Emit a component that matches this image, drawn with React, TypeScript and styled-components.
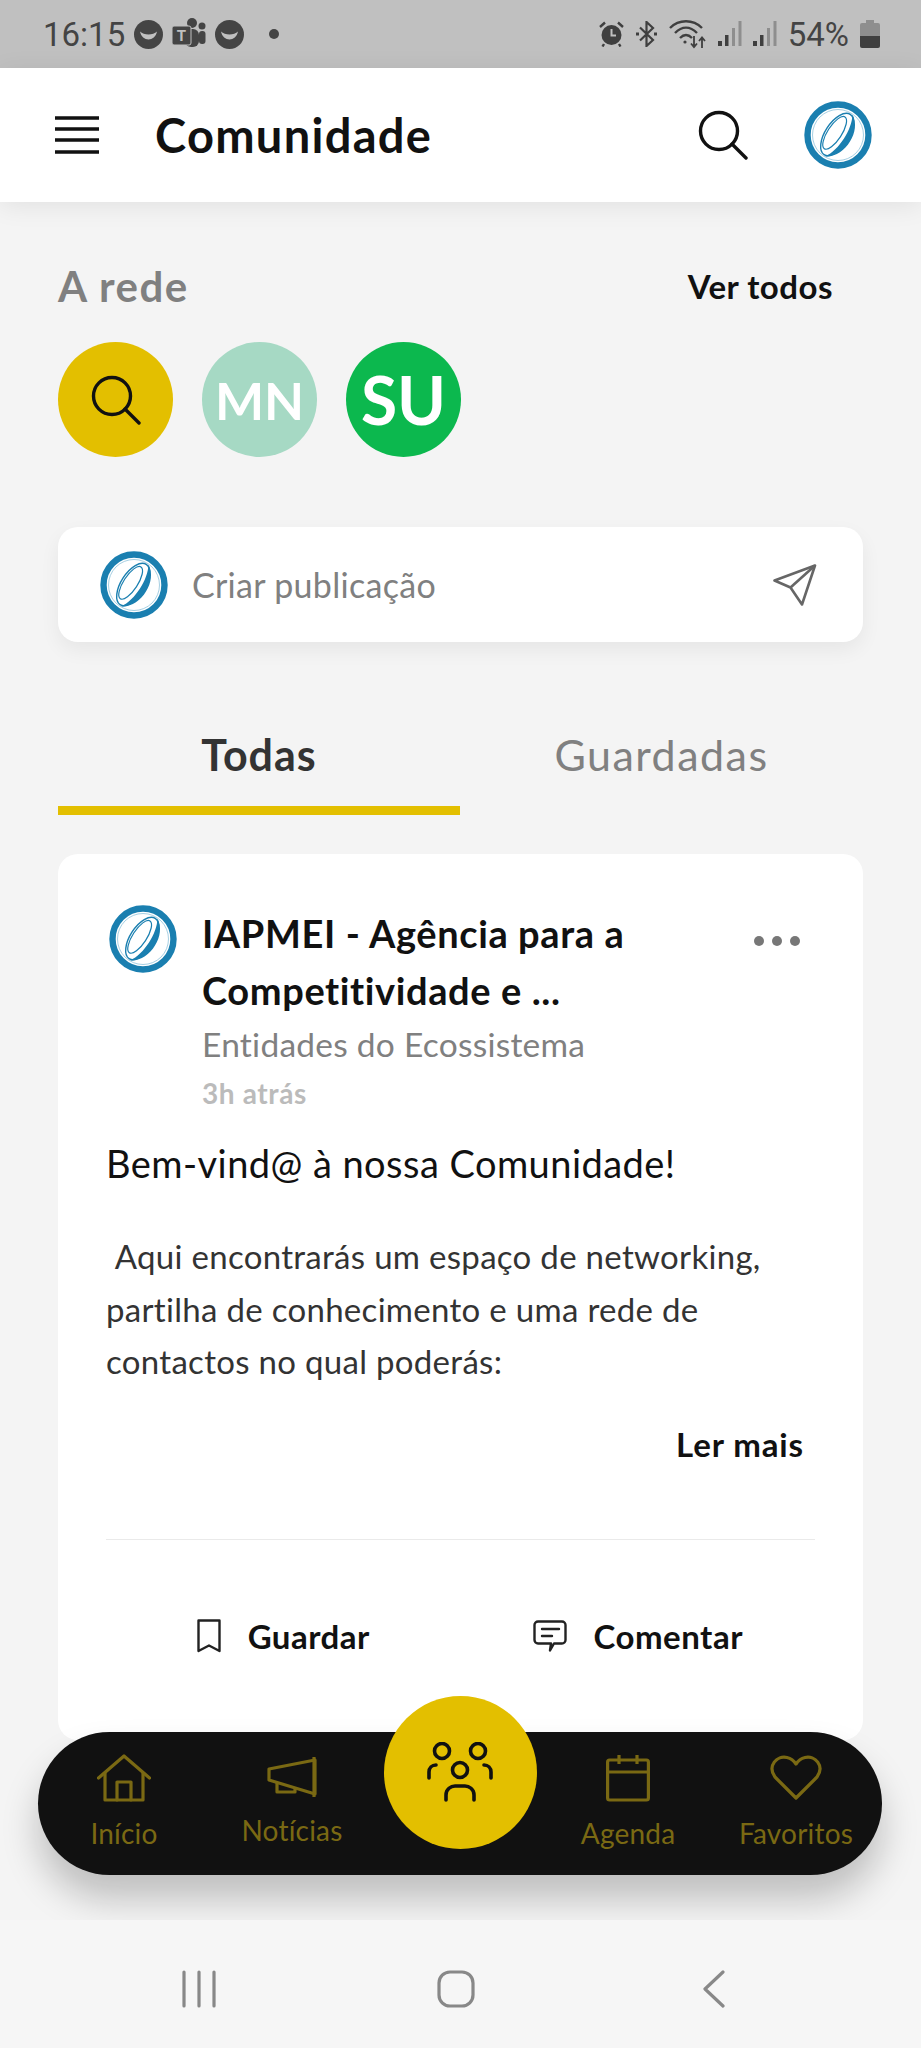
import React from "react";
import styled, { createGlobalStyle } from "styled-components";

const colors = {
  yellow: "#e3bf00",
  ink: "#111111",
  page: "#f4f4f4",
  muted: "#808080",
  navIcon: "#7a6913",
  blue: "#1a7fb0",
};

const GlobalStyle = createGlobalStyle`
  html, body {
    margin: 0;
    padding: 0;
    background: ${colors.page};
  }
  * {
    box-sizing: border-box;
  }
`;

const Page = styled.div`
  position: relative;
  width: 921px;
  height: 2048px;
  overflow: hidden;
  background: ${colors.page};
  font-family: "Lato", "Open Sans", sans-serif;
  color: ${colors.ink};
`;

const StatusBar = styled.div`
  height: 68px;
  padding: 0 41px 0 43px;
  display: flex;
  align-items: center;
  background: #c0c0c0;
  color: #444;
  font-family: "Roboto", sans-serif;
  font-size: 33px;
`;

const StatusLeft = styled.div`
  display: flex;
  align-items: center;
  gap: 9px;
`;

const StatusRight = styled.div`
  margin-left: auto;
  display: flex;
  align-items: center;
  gap: 11px;
`;

const Header = styled.header`
  position: relative;
  height: 134px;
  padding: 0 48px 0 55px;
  display: flex;
  align-items: center;
  background: #fff;
  box-shadow: 0 4px 24px rgba(0, 0, 0, 0.08);
`;

const HeaderTitle = styled.h1`
  margin: 0 0 0 56px;
  font-size: 47px;
  font-weight: 700;
  letter-spacing: 1.3px;
`;

const HeaderActions = styled.div`
  margin-left: auto;
  display: flex;
  align-items: center;
  gap: 56px;
  padding-right: 1px;
`;

const Main = styled.main`
  padding: 60px 58px 0;
`;

const NetworkHead = styled.div`
  height: 50px;
  padding: 0 30px 3px 0;
  display: flex;
  align-items: center;
  justify-content: space-between;
`;

const NetworkTitle = styled.h2`
  margin: 0;
  font-size: 42px;
  font-weight: 700;
  letter-spacing: 1.5px;
  color: ${colors.muted};
`;

const SeeAll = styled.span`
  font-size: 33px;
  font-weight: 700;
  letter-spacing: 0.5px;
`;

const Circles = styled.div`
  margin-top: 30px;
  display: flex;
  gap: 29px;
`;

const Circle = styled.div<{ $bg: string; $size?: number }>`
  width: 115px;
  height: 115px;
  border-radius: 50%;
  display: flex;
  align-items: center;
  justify-content: center;
  background: ${(p) => p.$bg};
  color: #fff;
  font-size: ${(p) => p.$size ?? 52}px;
  font-weight: 700;
`;

const Composer = styled.div`
  margin-top: 70px;
  height: 115px;
  padding: 0 46px 0 42px;
  display: flex;
  align-items: center;
  gap: 24px;
  background: #fff;
  border-radius: 20px;
  box-shadow: 0 8px 20px rgba(0, 0, 0, 0.06);
`;

const ComposerText = styled.span`
  flex: 1;
  font-size: 34px;
  letter-spacing: 0.3px;
  color: ${colors.muted};
`;

const Tabs = styled.div`
  margin-top: 72px;
  display: grid;
  grid-template-columns: 402px 1fr;
  height: 101px;
`;

const Tab = styled.div<{ $active?: boolean }>`
  padding-top: 16px;
  text-align: center;
  line-height: 50px;
  font-size: 43px;
  letter-spacing: ${(p) => (p.$active ? 1 : 1.5)}px;
  font-weight: ${(p) => (p.$active ? 700 : 400)};
  color: ${(p) => (p.$active ? "#333" : colors.muted)};
  border-bottom: 9px solid ${(p) => (p.$active ? colors.yellow : "transparent")};
`;

const Post = styled.article`
  margin-top: 39px;
  height: 886px;
  padding: 51px 48px 0;
  background: #fff;
  border-radius: 20px;
`;

const PostHead = styled.div`
  display: flex;
  align-items: flex-start;
  padding-left: 3px;
`;

const PostMeta = styled.div`
  margin-left: 25px;
  flex: 1;
`;

const PostAuthor = styled.div`
  font-size: 38px;
  font-weight: 700;
  letter-spacing: 0.6px;
  line-height: 57px;
`;

const PostGroup = styled.div`
  font-size: 33.5px;
  letter-spacing: 0.25px;
  line-height: 50px;
  color: ${colors.muted};
`;

const PostTime = styled.div`
  margin-top: 2px;
  font-size: 28px;
  font-weight: 700;
  letter-spacing: 0.6px;
  line-height: 44px;
  color: #bbb;
`;

const Dots = styled.div`
  margin: 31px 15px 0 0;
  display: flex;
  gap: 8px;
`;

const Dot = styled.span`
  width: 10px;
  height: 10px;
  border-radius: 50%;
  background: #777;
`;

const Greeting = styled.p`
  margin: 23px 0 0;
  font-size: 38px;
  letter-spacing: 0.45px;
  line-height: 50px;
`;

const Paragraph = styled.p`
  margin: 42px 0 0;
  font-size: 33px;
  letter-spacing: 0.3px;
  line-height: 52.5px;
  color: #333;
  white-space: pre-wrap;
`;

const ReadMore = styled.div`
  margin-top: 31px;
  padding-right: 11px;
  text-align: right;
  font-size: 33px;
  font-weight: 700;
  letter-spacing: 0.9px;
  line-height: 50px;
`;

const Divider = styled.hr`
  margin: 70px 0 0;
  border: 0;
  border-top: 1px solid #eaeaea;
`;

const Actions = styled.div`
  margin-top: 71px;
  display: grid;
  grid-template-columns: 1fr 1fr;
`;

const Action = styled.div`
  display: flex;
  align-items: center;
  justify-content: center;
  gap: 27px;
  font-size: 33px;
  font-weight: 700;
  letter-spacing: 0.5px;
  line-height: 50px;
`;

const Nav = styled.nav`
  position: absolute;
  left: 38px;
  top: 1732px;
  width: 844px;
  height: 143px;
  padding: 0 2px;
  display: grid;
  grid-template-columns: repeat(5, 1fr);
  background: ${colors.ink};
  border-radius: 72px;
  box-shadow: 0 24px 36px rgba(0, 0, 0, 0.22);
`;

const NavItem = styled.div`
  padding-top: 22px;
  display: flex;
  flex-direction: column;
  align-items: center;
  color: ${colors.navIcon};
`;

const NavIconSlot = styled.div`
  height: 48px;
  display: flex;
  align-items: center;
  justify-content: center;
`;

const NavLabel = styled.span<{ $raised?: boolean }>`
  margin-top: ${(p) => (p.$raised ? 10 : 13)}px;
  font-size: 28px;
  letter-spacing: 0.2px;
  line-height: 36px;
`;

const NavCenter = styled.div`
  justify-self: center;
  margin-top: -36px;
  width: 153px;
  height: 153px;
  border-radius: 50%;
  display: flex;
  align-items: center;
  justify-content: center;
  background: ${colors.yellow};
`;

const SystemBar = styled.div`
  position: absolute;
  left: 0;
  right: 0;
  bottom: 0;
  height: 128px;
  padding-top: 10px;
  display: grid;
  grid-template-columns: 398px 116px 1fr;
  align-items: center;
  background: #f6f6f6;
`;

const SystemSlot = styled.div<{ $inset?: number }>`
  display: flex;
  justify-content: center;
  padding-right: ${(p) => p.$inset ?? 0}px;
`;

const Logo = ({ size = 68 }: { size?: number }) => (
  <svg width={size} height={size} viewBox="0 0 68 68" fill="none">
    <circle cx="34" cy="34" r="30.5" stroke={colors.blue} strokeWidth="6.4" />
    <circle cx="34" cy="34" r="25.5" stroke="#8fc3da" strokeWidth="0.8" />
    <g transform="rotate(33 34 34)">
      <ellipse cx="33" cy="34" rx="12" ry="24" stroke={colors.blue} strokeWidth="1.4" />
      <ellipse cx="30" cy="34" rx="7" ry="19" stroke={colors.blue} strokeWidth="1.2" />
      <path d="M35 9 C52 18 52 50 35 59 C43 46 43 22 35 9 Z" fill={colors.blue} />
    </g>
  </svg>
);

const SearchIcon = ({ size, stroke = 3.4 }: { size: number; stroke?: number }) => (
  <svg width={size} height={size} viewBox="0 0 50 50" fill="none" stroke="#111" strokeWidth={stroke} strokeLinecap="round">
    <circle cx="21" cy="21" r="18.5" />
    <path d="M34 34 L48 48" />
  </svg>
);

const Hamburger = () => (
  <svg width="44" height="38" viewBox="0 0 44 38" fill="none" stroke="#111" strokeWidth="3.6">
    <path d="M0 2H44M0 13H44M0 24H44M0 36H44" />
  </svg>
);

const Smiley = () => (
  <svg width="29" height="29" viewBox="0 0 29 29">
    <circle cx="14.5" cy="14.5" r="14.5" fill="#444" />
    <path d="M6 11.5 C8 22 21 22 23 11.5 C19 15.5 10 15.5 6 11.5 Z" fill="#c0c0c0" />
  </svg>
);

const TeamsIcon = () => (
  <svg width="34" height="34" viewBox="0 0 34 34">
    <circle cx="20" cy="6" r="5" fill="#444" />
    <circle cx="30" cy="9" r="3.5" fill="#444" />
    <rect x="13" y="12" width="14" height="18" rx="6" fill="#444" />
    <rect x="27" y="14" width="6.5" height="13" rx="3" fill="#444" />
    <rect x="0" y="9" width="19" height="19" rx="2" fill="#444" stroke="#c0c0c0" strokeWidth="1" />
    <text x="9.5" y="24" textAnchor="middle" fontFamily="Roboto, sans-serif" fontWeight="700" fontSize="15" fill="#c0c0c0">T</text>
  </svg>
);

const AlarmIcon = () => (
  <svg width="25" height="26" viewBox="0 0 25 26" fill="none">
    <circle cx="12.5" cy="14" r="10" fill="#3f3f3f" />
    <path d="M12.5 8V14.5H17" stroke="#c0c0c0" strokeWidth="2" />
    <path d="M1 6L6 1.5M24 6L19 1.5M5 23L3.5 25.5M20 23L21.5 25.5" stroke="#3f3f3f" strokeWidth="2.4" />
  </svg>
);

const BluetoothIcon = () => (
  <svg width="23" height="26" viewBox="0 0 23 26" fill="none" stroke="#3f3f3f" strokeWidth="2.2">
    <path d="M5 6.5L18 19L11.5 25V1L18 7L5 19.5" />
    <path d="M1 13H4M19 13H22" strokeWidth="2.8" />
  </svg>
);

const WifiIcon = () => (
  <svg width="38" height="30" viewBox="0 0 38 30" fill="none" stroke="#3f3f3f" strokeWidth="2.4">
    <path d="M1 9C10 0 24 0 33 9M6 14C13 7 21 7 28 14M11 19C15 15 19 15 23 19" />
    <circle cx="16" cy="23" r="1.6" fill="#3f3f3f" stroke="none" />
    <path d="M25 17V28M22 24.5L25 28L28 24.5M33 29V19M30 22L33 18.5L36 22" strokeWidth="1.8" />
  </svg>
);

const SignalIcon = () => (
  <svg width="24" height="26" viewBox="0 0 24 26">
    <rect x="0" y="20" width="4" height="5" fill="#3f3f3f" />
    <rect x="7" y="14" width="3.5" height="11" fill="#3f3f3f" />
    <rect x="14" y="7" width="3" height="18" fill="#8e8e8e" />
    <rect x="20.5" y="0" width="3" height="25" fill="#8e8e8e" />
  </svg>
);

const BatteryIcon = () => (
  <svg width="20" height="28" viewBox="0 0 20 28">
    <rect x="6" y="0" width="8" height="3" fill="#8e8e8e" />
    <path d="M2 3H18A2 2 0 0 1 20 5V16H0V5A2 2 0 0 1 2 3Z" fill="#8e8e8e" />
    <path d="M0 16H20V26A2 2 0 0 1 18 28H2A2 2 0 0 1 0 26Z" fill="#3f3f3f" />
  </svg>
);

const SendIcon = () => (
  <svg width="44" height="42" viewBox="0 0 44 42" fill="none" stroke="#666" strokeWidth="2.6" strokeLinejoin="round">
    <path d="M42 1.5L1.5 16.5L17.5 23.5L29 40.5Z" />
    <path d="M42 1.5L17.5 23.5" />
  </svg>
);

const BookmarkIcon = () => (
  <svg width="24" height="34" viewBox="0 0 24 34" fill="none" stroke="#222" strokeWidth="2.4" strokeLinejoin="round">
    <path d="M1.5 1.5H22.5V32L12 26.5L1.5 32Z" />
  </svg>
);

const CommentIcon = () => (
  <svg width="34" height="32" viewBox="0 0 34 32" fill="none" stroke="#222" strokeWidth="2.4" strokeLinejoin="round" strokeLinecap="round">
    <path d="M5 1.5H29A3.5 3.5 0 0 1 32.5 5V20A3.5 3.5 0 0 1 29 23.5H21L17 30.5L18 23.5H5A3.5 3.5 0 0 1 1.5 20V5A3.5 3.5 0 0 1 5 1.5Z" />
    <path d="M9 9H26M9 16H19" />
  </svg>
);

const HomeIcon = () => (
  <svg width="54" height="48" viewBox="0 0 54 48" fill="none" stroke="currentColor" strokeWidth="3.2" strokeLinejoin="round" strokeLinecap="round">
    <path d="M1.5 24L27 2L52.5 24" />
    <path d="M8 19V46H46V19" />
    <path d="M20 46V28H34V46" />
  </svg>
);

const MegaphoneIcon = () => (
  <svg width="50" height="44" viewBox="0 0 50 44" fill="none" stroke="currentColor" strokeWidth="3.2" strokeLinejoin="round">
    <path d="M2 13L48 4V38L2 24Z" />
    <path d="M47 1V41" />
    <path d="M10 27V36H28V33" />
  </svg>
);

const CalendarIcon = () => (
  <svg width="44" height="48" viewBox="0 0 44 48" fill="none" stroke="currentColor" strokeWidth="3.2">
    <rect x="1.6" y="6" width="40.8" height="40" rx="2" />
    <path d="M2 18H42M13 1V10M31 1V10" />
  </svg>
);

const HeartIcon = () => (
  <svg width="52" height="46" viewBox="0 0 52 46" fill="none" stroke="currentColor" strokeWidth="3.2" strokeLinejoin="round">
    <path d="M26 43L5 22C-3 11 7 0 17 2.500C21 3.500 24 6 26 9C28 6 31 3.500 35 2.500C45 0 55 11 47 22Z" />
  </svg>
);

const PeopleIcon = () => (
  <svg width="66" height="62" viewBox="0 0 66 62" fill="none" stroke="#111" strokeWidth="3.6" strokeLinecap="round">
    <circle cx="15" cy="9" r="7.500" />
    <circle cx="51" cy="9" r="7.500" />
    <circle cx="33" cy="28" r="7.500" />
    <path d="M2 36V30C2 26 5 23 9 23" />
    <path d="M64 36V30C64 26 61 23 57 23" />
    <path d="M19 58V53C19 47 24 44 28 44H38C42 44 47 47 47 53V58" />
  </svg>
);

const RecentsIcon = () => (
  <svg width="34" height="38" viewBox="0 0 34 38" fill="none" stroke="#888" strokeWidth="3.2" strokeLinecap="round">
    <path d="M2 2V36M17 2V36M32 2V36" />
  </svg>
);

const HomeKeyIcon = () => (
  <svg width="38" height="38" viewBox="0 0 38 38" fill="none" stroke="#888" strokeWidth="3.2">
    <rect x="2" y="2" width="34" height="34" rx="11" />
  </svg>
);

const BackIcon = () => (
  <svg width="22" height="38" viewBox="0 0 22 38" fill="none" stroke="#888" strokeWidth="3.2" strokeLinecap="round" strokeLinejoin="round">
    <path d="M20 2L2 19L20 36" />
  </svg>
);

export default function App() {
  return (
    <Page>
      <GlobalStyle />
      <StatusBar>
        <StatusLeft>
          <span>16:15</span>
          <Smiley />
          <TeamsIcon />
          <Smiley />
          <svg width="10" height="10" viewBox="0 0 10 10" style={{ marginLeft: 16 }}>
            <circle cx="5" cy="5" r="5" fill="#444" />
          </svg>
        </StatusLeft>
        <StatusRight>
          <AlarmIcon />
          <BluetoothIcon />
          <WifiIcon />
          <SignalIcon />
          <SignalIcon />
          <span>54%</span>
          <BatteryIcon />
        </StatusRight>
      </StatusBar>

      <Header>
        <Hamburger />
        <HeaderTitle>Comunidade</HeaderTitle>
        <HeaderActions>
          <SearchIcon size={50} />
          <Logo />
        </HeaderActions>
      </Header>

      <Main>
        <NetworkHead>
          <NetworkTitle>A rede</NetworkTitle>
          <SeeAll>Ver todos</SeeAll>
        </NetworkHead>
        <Circles>
          <Circle $bg={colors.yellow}>
            <SearchIcon size={50} />
          </Circle>
          <Circle $bg="#a6d9c4">MN</Circle>
          <Circle $bg="#0cb84e" $size={66}>SU</Circle>
        </Circles>

        <Composer>
          <Logo />
          <ComposerText>Criar publicação</ComposerText>
          <SendIcon />
        </Composer>

        <Tabs>
          <Tab $active>Todas</Tab>
          <Tab>Guardadas</Tab>
        </Tabs>

        <Post>
          <PostHead>
            <Logo />
            <PostMeta>
              <PostAuthor>
                IAPMEI - Agência para a
                <br />
                Competitividade e ...
              </PostAuthor>
              <PostGroup>Entidades do Ecossistema</PostGroup>
              <PostTime>3h atrás</PostTime>
            </PostMeta>
            <Dots>
              <Dot />
              <Dot />
              <Dot />
            </Dots>
          </PostHead>
          <Greeting>Bem-vind@ à nossa Comunidade!</Greeting>
          <Paragraph>
            {" Aqui encontrarás um espaço de networking,\npartilha de conhecimento e uma rede de\ncontactos no qual poderás:"}
          </Paragraph>
          <ReadMore>Ler mais</ReadMore>
          <Divider />
          <Actions>
            <Action>
              <BookmarkIcon />
              Guardar
            </Action>
            <Action>
              <CommentIcon />
              Comentar
            </Action>
          </Actions>
        </Post>
      </Main>

      <Nav>
        <NavItem>
          <NavIconSlot>
            <HomeIcon />
          </NavIconSlot>
          <NavLabel>Início</NavLabel>
        </NavItem>
        <NavItem>
          <NavIconSlot>
            <MegaphoneIcon />
          </NavIconSlot>
          <NavLabel $raised>Notícias</NavLabel>
        </NavItem>
        <NavCenter>
          <PeopleIcon />
        </NavCenter>
        <NavItem>
          <NavIconSlot>
            <CalendarIcon />
          </NavIconSlot>
          <NavLabel>Agenda</NavLabel>
        </NavItem>
        <NavItem>
          <NavIconSlot>
            <HeartIcon />
          </NavIconSlot>
          <NavLabel>Favoritos</NavLabel>
        </NavItem>
      </Nav>

      <SystemBar>
        <SystemSlot>
          <RecentsIcon />
        </SystemSlot>
        <SystemSlot>
          <HomeKeyIcon />
        </SystemSlot>
        <SystemSlot $inset={8}>
          <BackIcon />
        </SystemSlot>
      </SystemBar>
    </Page>
  );
}
